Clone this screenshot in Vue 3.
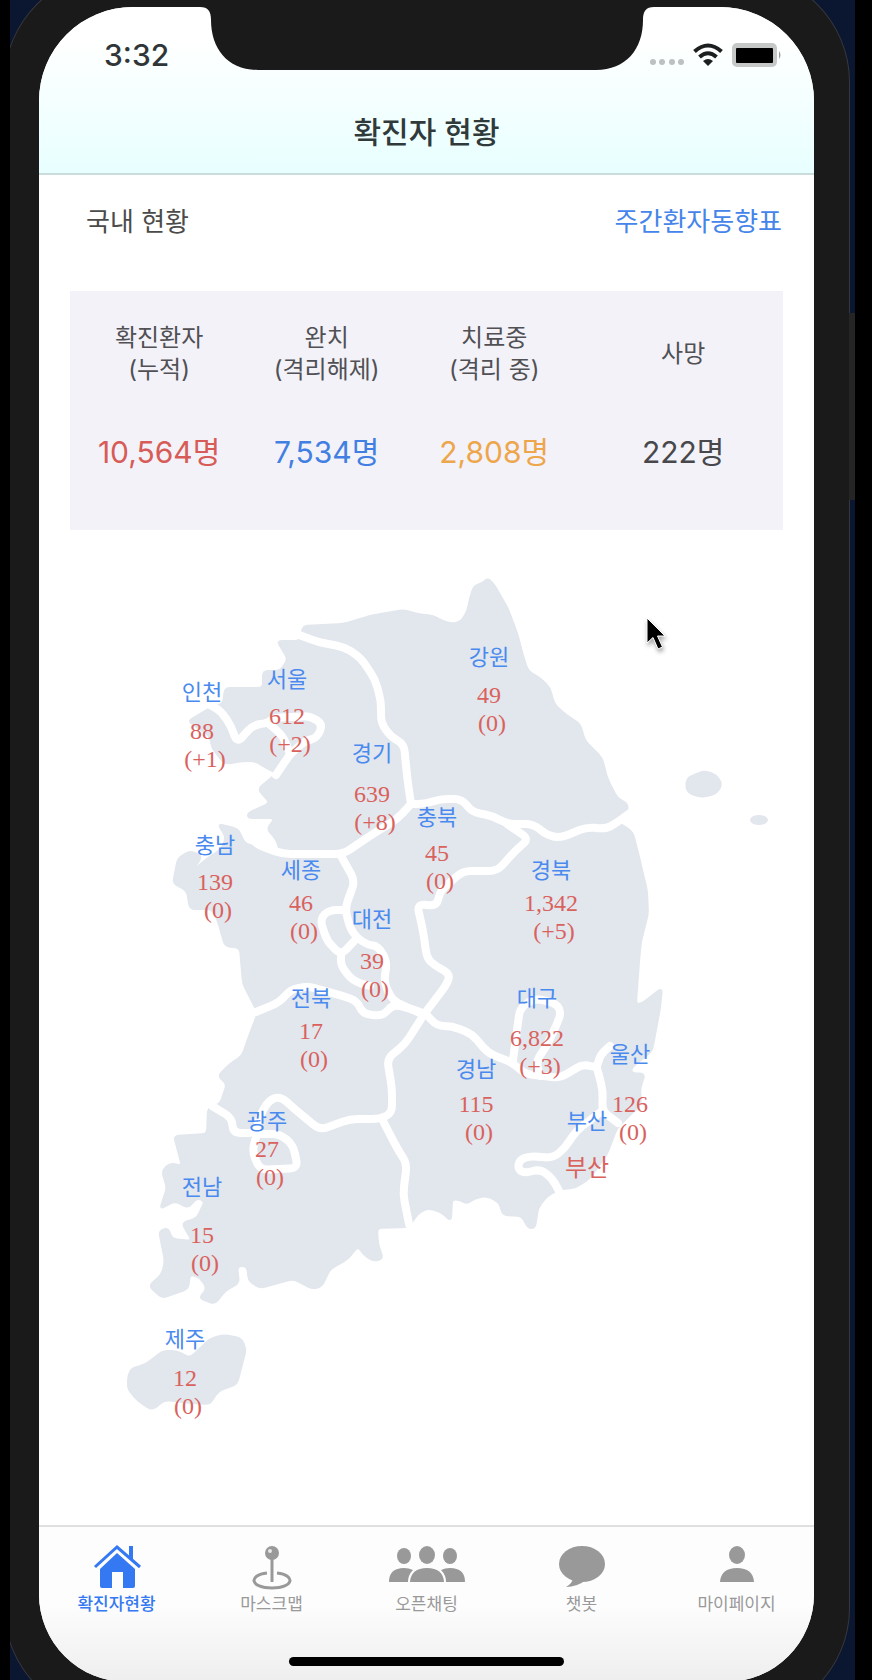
<script setup>
const summary = [
  { label: ['확진환자', '(누적)'], value: '10,564명', tone: 'red' },
  { label: ['완치', '(격리해제)'], value: '7,534명', tone: 'blue' },
  { label: ['치료중', '(격리 중)'], value: '2,808명', tone: 'orange' },
  { label: ['사망'], value: '222명', tone: 'dark' },
]

const regions = [
  { name: '강원', x: 489, y: 657, count: '49', delta: '(0)', cy: 695 },
  { name: '서울', x: 287, y: 679, count: '612', delta: '(+2)', cy: 716 },
  { name: '인천', x: 202, y: 692, count: '88', delta: '(+1)', cy: 731 },
  { name: '경기', x: 372, y: 753, count: '639', delta: '(+8)', cy: 794 },
  { name: '충북', x: 437, y: 817, count: '45', delta: '(0)', cy: 853 },
  { name: '충남', x: 215, y: 845, count: '139', delta: '(0)', cy: 882 },
  { name: '세종', x: 301, y: 870, count: '46', delta: '(0)', cy: 903 },
  { name: '경북', x: 551, y: 870, count: '1,342', delta: '(+5)', cy: 903 },
  { name: '대전', x: 372, y: 919, count: '39', delta: '(0)', cy: 961 },
  { name: '대구', x: 537, y: 998, count: '6,822', delta: '(+3)', cy: 1038 },
  { name: '전북', x: 311, y: 998, count: '17', delta: '(0)', cy: 1031 },
  { name: '울산', x: 630, y: 1054, count: '126', delta: '(0)', cy: 1104 },
  { name: '경남', x: 476, y: 1069, count: '115', delta: '(0)', cy: 1104 },
  { name: '부산', x: 587, y: 1121, count: '부산', delta: '', cy: 1168 },
  { name: '광주', x: 267, y: 1121, count: '27', delta: '(0)', cy: 1149 },
  { name: '전남', x: 202, y: 1187, count: '15', delta: '(0)', cy: 1235 },
  { name: '제주', x: 185, y: 1339, count: '12', delta: '(0)', cy: 1378 },
]

const tabs = [
  { id: 'home', label: '확진자현황' },
  { id: 'pin', label: '마스크맵' },
  { id: 'people', label: '오픈채팅' },
  { id: 'chat', label: '챗봇' },
  { id: 'me', label: '마이페이지' },
]

const landOutlines = [
  '303,625 343,623 370,615 403,609 418,613 433,615 443,620 452,623 462,620 468,608 470,597 474,585 483,582 488,577 495,585 508,608 518,635 523,655 528,670 540,677 550,687 554,703 566,714 580,723 585,740 602,757 607,777 617,797 628,803 627,812 613,824 622,823 633,832 640,860 647,890 648,913 641,940 639,960 636,1003 641,1003 662,987 660,1007 652,1050 632,1066 631,1072 645,1073 640,1087 641,1103 627,1117 617,1127 607,1153 590,1177 575,1187 560,1188 547,1195 538,1207 535,1227 528,1227 522,1215 503,1214 499,1201 487,1195 475,1197 467,1203 460,1199 452,1198 451,1220 441,1211 428,1207 417,1213 412,1222 407,1226 377,1227 378,1243 383,1258 373,1260 363,1253 358,1245 348,1258 330,1268 322,1285 313,1288 293,1278 260,1287 249,1280 247,1265 237,1265 239,1282 225,1290 215,1303 199,1297 207,1288 201,1277 190,1273 188,1288 162,1297 149,1285 162,1273 165,1260 159,1230 168,1227 172,1238 192,1240 182,1222 197,1217 205,1200 197,1197 188,1207 175,1200 160,1208 167,1187 162,1170 170,1162 182,1165 174,1135 207,1133 208,1107 220,1103 227,1083 218,1075 230,1063 242,1055 252,1027 258,1012 243,983 240,947 225,945 218,920 212,908 190,908 187,890 173,882 178,857 190,850 202,855 192,871 205,859 222,848 226,836 218,823 238,828 245,843 280,850 276,838 267,828 275,817 248,817 248,812 270,802 258,788 277,772 268,768 255,760 243,760 225,763 212,747 210,735 188,720 210,707 223,703 225,687 263,687 263,670 280,670 288,658 277,640 300,640',
  '128,1375 132,1367 145,1364 163,1350 177,1350 190,1357 210,1338 223,1334 241,1337 246,1348 237,1383 218,1390 210,1403 192,1402 165,1399 152,1409 138,1400 128,1388',
  '687,777 699,772 705,770 716,774 722,783 717,792 705,796 692,794 686,788',
]

const borderLines = [
  '294,632 318,641 344,646 360,656 375,678 381,700 381,722 391,736 404,743 407,775 411,803',
  '411,803 425,803 440,798 462,798 472,811 493,815 507,823 533,823 547,834 560,837 587,826 606,828 616,822 630,812',
  '507,823 529,838 517,848 497,870 463,870 440,890 437,905 417,903 423,930 427,957 434,964 450,973 447,983 425,1012',
  '411,803 397,818 370,835 343,853 320,853 283,853 257,844 240,822',
  '341,855 355,880 345,907 350,927 357,937 368,944 378,945 387,960 384,982 393,1000 420,1012',
  '345,909 329,909 320,918 327,940 341,954 357,937',
  '341,954 341,965 353,980 370,985',
  '256,1011 280,1001 290,989 307,985 343,995 357,1000 363,1013 383,1015 393,1003 425,1012 405,1043 387,1058 392,1087 392,1112 380,1118 350,1118 320,1129 297,1110 280,1095 268,1100 259,1117 256,1132 233,1132 232,1117 212,1105',
  '383,1120 397,1147 407,1163 403,1193 409,1223',
  '425,1012 437,1025 452,1025 472,1033 488,1052 513,1062 525,1073 560,1077 583,1063 597,1067 600,1054 610,1045',
  '597,1067 603,1090 602,1110 618,1122',
  '602,1110 576,1130 565,1147 553,1157 530,1155 519,1159 518,1169 526,1172 540,1168 552,1177 559,1190',
  '513,1059 520,1007 535,997 557,1003 561,1012 557,1023 546,1046 536,1060 540,1075',
  '257,1133 280,1133 293,1144 298,1167 260,1169 252,1150 257,1133',
  '210,704 221,710 231,725 237,742 253,724 268,722 273,717 310,715 323,723 317,737 305,740 290,753 276,774',
  '268,722 283,735 290,753',
]

// Turns a list of points into a path whose corners are rounded by up to `radius`.
function roundedPath(list, radius, closed) {
  const pts = list.split(' ').map((p) => p.split(',').map(Number))
  const n = pts.length
  const toward = (a, b) => {
    const len = Math.hypot(b[0] - a[0], b[1] - a[1])
    const t = Math.min(radius, len / 2) / len
    return [a[0] + (b[0] - a[0]) * t, a[1] + (b[1] - a[1]) * t].map((v) => v.toFixed(1)).join(' ')
  }
  const corner = (i) => {
    const p = pts[i]
    return `${toward(p, pts[(i - 1 + n) % n])}Q${p.join(' ')} ${toward(p, pts[(i + 1) % n])}`
  }
  if (closed) return 'M' + pts.map((_, i) => corner(i)).join('L') + 'Z'
  const middle = pts.slice(1, -1).map((_, i) => 'L' + corner(i + 1)).join('')
  return `M${pts[0].join(' ')}${middle}L${pts[n - 1].join(' ')}`
}
</script>

<template>
  <div class="stage">
    <div class="backdrop">
      <div class="phone">
        <span class="side-button"></span>
        <div class="screen">
          <svg class="notch" width="454" height="64" viewBox="0 0 454 64" aria-hidden="true">
            <path d="M0 0C8 0 11 4 11 13C11 42 28 63 58 63H396C426 63 443 42 443 13C443 4 446 0 454 0Z" fill="#1a1a1a" />
          </svg>

          <header class="header">
            <div class="status">
              <span class="time">3:32</span>
              <svg class="status-icons" width="132" height="28" viewBox="650 41 132 28" aria-hidden="true">
                <g fill="#bdc1c1">
                  <circle cx="653" cy="62" r="3" /><circle cx="662" cy="62" r="3" />
                  <circle cx="672" cy="62" r="3" /><circle cx="681" cy="62" r="3" />
                </g>
                <g fill="none" stroke="#1c1f20" stroke-width="4">
                  <path d="M694.500 51.500Q708 39.500 721.500 51.500" />
                  <path d="M699.500 57Q708 49.500 716.500 57" />
                </g>
                <path d="M703 61Q708 57 713 61L708 66Z" fill="#1c1f20" />
                <rect x="732" y="43" width="45" height="24" rx="5" fill="#c6c8c8" />
                <rect x="736" y="48" width="37" height="15" rx="1" fill="#000" />
                <path d="M779 51Q782 55 779 59Z" fill="#9b9d9d" />
              </svg>
            </div>
            <h1 class="title">확진자 현황</h1>
          </header>

          <main class="content">
            <div class="section-head">
              <h2>국내 현황</h2>
              <a href="#weekly">주간환자동향표</a>
            </div>

            <table class="summary">
              <colgroup><col class="c1" /><col class="c2" /><col class="c3" /><col class="c4" /></colgroup>
              <thead>
                <tr>
                  <th v-for="s in summary" :key="s.value" scope="col">
                    <span v-for="line in s.label" :key="line">{{ line }}</span>
                  </th>
                </tr>
              </thead>
              <tbody>
                <tr>
                  <td v-for="s in summary" :key="s.value" :class="s.tone">{{ s.value }}</td>
                </tr>
              </tbody>
            </table>

            <svg class="map" viewBox="39 529 775 995" role="img" aria-label="지역별 확진자 현황">
              <g class="land">
                <path v-for="o in landOutlines" :key="o" :d="roundedPath(o, 5, true)" />
                <ellipse cx="759" cy="819" rx="8" ry="4" />
              </g>
              <g class="borders">
                <path v-for="b in borderLines" :key="b" :d="roundedPath(b, 8, false)" />
              </g>
              <g v-for="r in regions" :key="r.name">
                <text class="name" :x="r.x" :y="r.y + 7">{{ r.name }}</text>
                <text class="count" :x="r.x" :y="r.cy + 7">{{ r.count }}</text>
                <text v-if="r.delta" class="count" :x="r.x + 3" :y="r.cy + 35">{{ r.delta }}</text>
              </g>
              <path class="cursor" d="M647 617V642L653 636.500L658 648L662.500 646L657.500 635H665Z" />
            </svg>
          </main>

          <nav class="tabbar">
            <div class="tabs">
              <button v-for="(t, i) in tabs" :key="t.id" type="button" :class="['tab', { active: i === 0 }]">
                <svg width="84" height="48" viewBox="0 0 84 48" fill="currentColor" aria-hidden="true">
                  <template v-if="t.id === 'home'">
                    <path d="M20 24L42 4L65 24" fill="none" stroke="currentColor" stroke-width="3" />
                    <path d="M54 3H58V18L54 14Z" />
                    <path d="M42 10L60 26V43Q60 45 58 45H48V29H37V45H27Q25 45 25 43V26Z" />
                  </template>
                  <template v-else-if="t.id === 'pin'">
                    <circle cx="42" cy="10" r="7" />
                    <circle cx="40" cy="8" r="2" fill="#e8e8e8" />
                    <path d="M42 16V39" stroke="currentColor" stroke-width="3" />
                    <path d="M37 30C18 32 20 45 42 45S66 32 47 30" fill="none" stroke="currentColor" stroke-width="3" />
                  </template>
                  <template v-else-if="t.id === 'people'">
                    <ellipse cx="19" cy="13" rx="7" ry="8" />
                    <ellipse cx="65" cy="13" rx="7" ry="8" />
                    <ellipse cx="42" cy="12" rx="8" ry="9" />
                    <path d="M4 39Q4 25 19 25Q24 25 28 27Q23 32 23 39Z" />
                    <path d="M80 39Q80 25 65 25Q60 25 56 27Q61 32 61 39Z" />
                    <path d="M25 39Q26 25 42 25T59 39Z" />
                  </template>
                  <template v-else-if="t.id === 'chat'">
                    <ellipse cx="42" cy="21" rx="23" ry="18" />
                    <path d="M33 34Q33 40 26 44Q37 44 46 37Z" />
                  </template>
                  <template v-else>
                    <ellipse cx="42" cy="12" rx="8" ry="9" />
                    <path d="M25 39Q26 25 42 25T59 39Z" />
                  </template>
                </svg>
                <span>{{ t.label }}</span>
              </button>
            </div>
            <div class="home-indicator"></div>
          </nav>
        </div>
      </div>
    </div>
  </div>
</template>

<style>
body {
  background: #000;
}
</style>

<style scoped>
* {
  box-sizing: border-box;
}
.stage {
  min-height: 100vh;
  display: flex;
  padding: 0 17px 0 10px;
  background: #000;
  font-family: Inter, "Noto Sans CJK KR", sans-serif;
}
.backdrop {
  flex: 1;
  min-width: 0;
  display: flex;
  overflow: hidden;
  padding-right: 5px;
  background: #0b1630;
}
.phone {
  position: relative;
  flex: 1;
  min-width: 0;
  display: flex;
  margin: -28px 0 -37px -6px;
  padding: 35px 36px 36px 35px;
  border-radius: 110px;
  background: #1a1a1a;
  box-shadow: inset 0 0 0 1px #353741;
}
.side-button {
  position: absolute;
  top: 341px;
  right: -5px;
  width: 6px;
  height: 187px;
  background: #252525;
}
.screen {
  position: relative;
  flex: 1;
  min-width: 0;
  display: flex;
  flex-direction: column;
  overflow: hidden;
  border-radius: 94px 94px 88px 88px;
  background: #fff;
}
.notch {
  position: absolute;
  top: 0;
  left: 50%;
  margin-left: -227px;
}
.header {
  padding-bottom: 12px;
  border-bottom: 2px solid #cbdcdd;
  background: linear-gradient(#fff 20%, #e8ffff);
}
.status {
  height: 96px;
  display: flex;
  align-items: center;
  justify-content: space-between;
  padding: 0 32px 0 65px;
}
.time {
  font-size: 30px;
  font-weight: 500;
  color: #303638;
}
.title {
  margin: 0;
  font-size: 30px;
  line-height: 58px;
  font-weight: 500;
  text-align: center;
  color: #303a3b;
}
.content {
  flex: 1;
}
.section-head {
  display: flex;
  justify-content: space-between;
  padding: 28px 32px 50px 47px;
  font-size: 26px;
  line-height: 38px;
}
.section-head h2 {
  margin: 0;
  font-size: 26px;
  font-weight: 400;
  color: #4b4b4b;
}
.section-head a {
  color: #4585ea;
  text-decoration: none;
}
.summary {
  width: calc(100% - 62px);
  height: 239px;
  margin: 0 31px;
  padding-bottom: 43px;
  border-spacing: 0;
  table-layout: fixed;
  background: #f3f2f8;
}
.c1,
.c3 {
  width: 25%;
}
.c2 {
  width: 22%;
}
.c4 {
  width: 28%;
}
.summary th,
.summary td {
  padding: 0;
  text-align: center;
  vertical-align: middle;
  font-weight: 400;
}
.summary th {
  height: 126px;
  font-size: 24px;
  line-height: 32px;
  color: #505055;
}
.summary th span {
  display: block;
}
.summary td {
  height: 70px;
  font-size: 30px;
  line-height: 40px;
}
.red {
  color: #d75b56;
}
.blue {
  color: #4180e2;
}
.orange {
  color: #eda64c;
}
.dark {
  color: #48484c;
}
.map {
  display: block;
  width: 100%;
}
.land {
  fill: #e2e6ed;
  stroke: #e2e6ed;
  stroke-width: 2;
  stroke-linejoin: round;
}
.borders {
  fill: none;
  stroke: #fff;
  stroke-width: 8;
  stroke-linejoin: round;
  stroke-linecap: round;
}
.name {
  fill: #4a8aee;
  font-size: 22px;
  text-anchor: middle;
}
.count {
  fill: #d9625d;
  font-family: "Liberation Serif", "Noto Sans CJK KR", serif;
  font-size: 24px;
  text-anchor: middle;
}
.cursor {
  fill: #000;
  stroke: #fff;
  stroke-width: 1;
  filter: drop-shadow(1px 3px 2px rgba(0, 0, 0, 0.35));
}
.tabbar {
  padding: 16px 0 16px;
  border-top: 2px solid #e0e0e0;
  background: linear-gradient(#fdfdfd 50%, #eeeeee);
}
.tabs {
  display: flex;
}
.tab {
  flex: 1;
  min-width: 0;
  display: flex;
  flex-direction: column;
  align-items: center;
  padding: 0;
  border: 0;
  background: none;
  color: #999;
  font-family: inherit;
  font-size: 17px;
  line-height: 26px;
}
.tab.active {
  color: #3478f2;
  font-weight: 500;
}
.home-indicator {
  width: 275px;
  height: 9px;
  margin: 40px auto 0;
  border-radius: 5px;
  background: #000;
}
</style>
